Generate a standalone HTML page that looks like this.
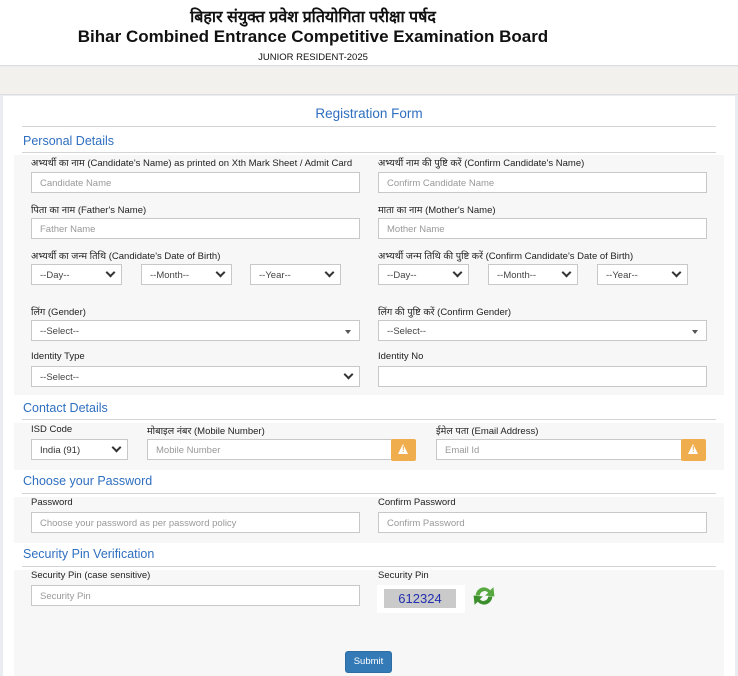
<!DOCTYPE html>
<html><head><meta charset="utf-8">
<style>
*{margin:0;padding:0;box-sizing:border-box}
body{width:738px;height:676px;overflow:hidden;background:#e9edf2;font-family:"Liberation Sans","Noto Sans CJK SC",sans-serif;position:relative;color:#222}
.a{position:absolute}
.lbl{position:absolute;font-size:9.5px;color:#222;white-space:nowrap}
.inp{position:absolute;height:21px;background:#fff;border:1px solid #c8c8c8;font-size:9.5px;color:#999;padding:5px 8px;white-space:nowrap}
.sel{position:absolute;height:21px;background:#fff;border:1px solid #c8c8c8;font-size:9.5px;color:#444;padding:5px 8px;white-space:nowrap}
.chev{position:absolute;right:7px;top:4px;width:7px;height:7px;border-right:2px solid #333;border-bottom:2px solid #333;transform:rotate(45deg)}
.tri{position:absolute;right:8px;top:9px;border-left:3px solid transparent;border-right:3px solid transparent;border-top:4px solid #555}
.sec{position:absolute;left:23px;font-size:12.5px;color:#2f6fc0}
.hr{position:absolute;left:22px;width:694px;height:1px;background:#d4d4d4}
.panel{position:absolute;left:14px;width:710px;background:#f7f7f7}
.warn{position:absolute;width:25px;height:22px;background:#f0ad4e;border-radius:2px}
.warn:after{content:"";position:absolute;left:7px;top:5px;border-left:5.5px solid transparent;border-right:5.5px solid transparent;border-bottom:10px solid #fff}
.warn:before{content:"!";position:absolute;left:11px;top:6px;font-size:8px;font-weight:bold;color:#f0ad4e;z-index:2}
</style></head><body>
<div class="a" style="left:0;top:0;width:738px;height:66px;background:#fff;border-bottom:1px solid #ddd"></div>
<div class="a" style="left:0;top:8px;width:626px;text-align:center;font-size:16px;font-weight:bold;color:#111;line-height:20px">बिहार संयुक्त प्रवेश प्रतियोगिता परीक्षा पर्षद</div>
<div class="a" style="left:0;top:27px;width:626px;text-align:center;font-size:17px;font-weight:bold;color:#111;line-height:20px">Bihar Combined Entrance Competitive Examination Board</div>
<div class="a" style="left:0;top:52px;width:626px;text-align:center;font-size:9.5px;color:#111">JUNIOR RESIDENT-2025</div>
<div class="a" style="left:0;top:67px;width:738px;height:28px;background:#f3f1ed;border-bottom:1px solid #ddd"></div>
<div class="a" style="left:3px;top:96px;width:732px;height:580px;background:#fff"></div>
<div class="a" style="left:0;top:106px;width:738px;text-align:center;font-size:13.5px;color:#2f6fc0">Registration Form</div>
<div class="hr" style="top:126px"></div>
<div class="sec" style="top:134px">Personal Details</div>
<div class="hr" style="top:152px"></div>
<div class="panel" style="top:155px;height:240px"></div>
<div class="lbl" style="left:31px;top:156px">अभ्यर्थी का नाम (Candidate's Name) as printed on Xth Mark Sheet / Admit Card</div>
<div class="lbl" style="left:378px;top:156px">अभ्यर्थी नाम की पुष्टि करें (Confirm Candidate's Name)</div>
<div class="inp" style="left:31px;top:172px;width:329px">Candidate Name</div>
<div class="inp" style="left:378px;top:172px;width:329px">Confirm Candidate Name</div>
<div class="lbl" style="left:31px;top:203px">पिता का नाम (Father's Name)</div>
<div class="lbl" style="left:378px;top:203px">माता का नाम (Mother's Name)</div>
<div class="inp" style="left:31px;top:218px;width:329px">Father Name</div>
<div class="inp" style="left:378px;top:218px;width:329px">Mother Name</div>
<div class="lbl" style="left:31px;top:249px">अभ्यर्थी का जन्म तिथि (Candidate's Date of Birth)</div>
<div class="lbl" style="left:378px;top:249px">अभ्यर्थी जन्म तिथि की पुष्टि करें (Confirm Candidate's Date of Birth)</div>
<div class="sel" style="left:31px;top:264px;width:91px">--Day--<span class="chev"></span></div>
<div class="sel" style="left:141px;top:264px;width:91px">--Month--<span class="chev"></span></div>
<div class="sel" style="left:250px;top:264px;width:91px">--Year--<span class="chev"></span></div>
<div class="sel" style="left:378px;top:264px;width:91px">--Day--<span class="chev"></span></div>
<div class="sel" style="left:488px;top:264px;width:90px">--Month--<span class="chev"></span></div>
<div class="sel" style="left:597px;top:264px;width:91px">--Year--<span class="chev"></span></div>
<div class="lbl" style="left:31px;top:305px">लिंग (Gender)</div>
<div class="lbl" style="left:378px;top:305px">लिंग की पुष्टि करें (Confirm Gender)</div>
<div class="sel" style="left:31px;top:320px;width:329px">--Select--<span class="tri"></span></div>
<div class="sel" style="left:378px;top:320px;width:329px">--Select--<span class="tri"></span></div>
<div class="lbl" style="left:31px;top:351px">Identity Type</div>
<div class="lbl" style="left:378px;top:351px">Identity No</div>
<div class="sel" style="left:31px;top:366px;width:329px">--Select--<span class="chev"></span></div>
<div class="inp" style="left:378px;top:366px;width:329px"></div>

<div class="sec" style="top:401px">Contact Details</div>
<div class="hr" style="top:419px"></div>
<div class="panel" style="top:423px;height:47px"></div>
<div class="lbl" style="left:31px;top:424px">ISD Code</div>
<div class="lbl" style="left:147px;top:424px">मोबाइल नंबर (Mobile Number)</div>
<div class="lbl" style="left:436px;top:424px">ईमेल पता (Email Address)</div>
<div class="sel" style="left:31px;top:439px;width:97px;color:#333">India (91)<span class="chev"></span></div>
<div class="inp" style="left:147px;top:439px;width:245px">Mobile Number</div>
<div class="warn" style="left:391px;top:439px"></div>
<div class="inp" style="left:436px;top:439px;width:246px">Email Id</div>
<div class="warn" style="left:681px;top:439px"></div>

<div class="sec" style="top:474px">Choose your Password</div>
<div class="hr" style="top:493px"></div>
<div class="panel" style="top:497px;height:46px"></div>
<div class="lbl" style="left:31px;top:497px">Password</div>
<div class="lbl" style="left:378px;top:497px">Confirm Password</div>
<div class="inp" style="left:31px;top:512px;width:329px">Choose your password as per password policy</div>
<div class="inp" style="left:378px;top:512px;width:329px">Confirm Password</div>

<div class="sec" style="top:547px">Security Pin Verification</div>
<div class="hr" style="top:566px"></div>
<div class="panel" style="top:570px;height:106px"></div>
<div class="lbl" style="left:31px;top:570px">Security Pin (case sensitive)</div>
<div class="lbl" style="left:378px;top:570px">Security Pin</div>
<div class="inp" style="left:31px;top:585px;width:329px">Security Pin</div>
<div class="a" style="left:377px;top:585px;width:88px;height:28px;background:#fff"></div>
<div class="a" style="left:384px;top:589px;width:72px;height:19px;background:#cacaca;color:#2230b0;font-size:13px;text-align:center;line-height:19px">612324</div>
<svg class="a" style="left:472px;top:584px" width="24" height="24" viewBox="0 0 22 23">
<path d="M3 11 A8 8 0 0 1 17 6 L20 3 L21 12 L12 11 L15 8.5 A4.5 4.5 0 0 0 7 11 Z" fill="#56a83f"/>
<path d="M19 12 A8 8 0 0 1 5 17 L2 20 L1 11 L10 12 L7 14.5 A4.5 4.5 0 0 0 15 12 Z" fill="#3d8f2e"/>
</svg>
<div class="a" style="left:345px;top:651px;width:47px;height:22px;background:#337ab7;border:1px solid #2e6da4;border-radius:3px;color:#fff;font-size:9.5px;text-align:center;line-height:20px">Submit</div>
</body></html>
